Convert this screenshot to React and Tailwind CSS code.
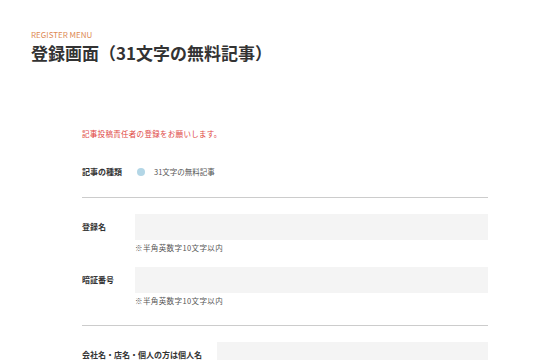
import React from 'react';

const jp = { fontFamily: '"Noto Sans CJK JP", "Noto Sans", sans-serif' };

function Field({ label, labelWidth = 'w-[53px]', note }) {
  return (
    <div>
      <div className="flex items-center">
        <div className={`${labelWidth} shrink-0 text-[8px] font-bold text-[#333]`}>{label}</div>
        <div className="flex-1 h-[26px] bg-[#f4f4f4]" />
      </div>
      {note && (
        <div className="mt-[3px] pl-[53px] h-[10px] leading-[10px] text-[7.5px] tracking-[0.4px] text-[#555]">
          {note}
        </div>
      )}
    </div>
  );
}

export default function App() {
  return (
    <div className="w-[560px] h-[360px] overflow-hidden bg-white" style={jp}>
      {/* Header */}
      <div className="pt-[30px] pl-[31px]">
        <div className="h-[10px] leading-[10px] text-[8px] text-[#dd8a55]">REGISTER MENU</div>
        <h1 className="mt-[3px] h-[20px] leading-[20px] text-[17px] font-bold text-[#333]">
          登録画面（31文字の無料記事）
        </h1>
      </div>

      {/* Form */}
      <div className="ml-[82px] w-[406px]">
        <p className="mt-[65px] h-[12px] leading-[12px] text-[7.5px] tracking-[0.3px] text-[#e0463f]">
          記事投稿責任者の登録をお願いします。
        </p>

        <div className="mt-[26px] h-[12px] flex items-center">
          <div className="w-[53px] text-[8px] font-bold text-[#333]">記事の種類</div>
          <span className="w-[8px] h-[8px] ml-[2px] rounded-full bg-[#b3d6e6]" />
          <span className="ml-[9px] text-[7.5px] text-[#555]">31文字の無料記事</span>
        </div>

        <div className="mt-[19px] h-px bg-[#cccccc]" />

        <div className="mt-[16px]">
          <Field label="登録名" note="※半角英数字10文字以内" />
        </div>
        <div className="mt-[14px]">
          <Field label="暗証番号" note="※半角英数字10文字以内" />
        </div>

        <div className="mt-[19px] h-px bg-[#cccccc]" />

        <div className="mt-[16px]">
          <Field label="会社名・店名・個人の方は個人名" labelWidth="w-[135px]" />
        </div>
      </div>
    </div>
  );
}
